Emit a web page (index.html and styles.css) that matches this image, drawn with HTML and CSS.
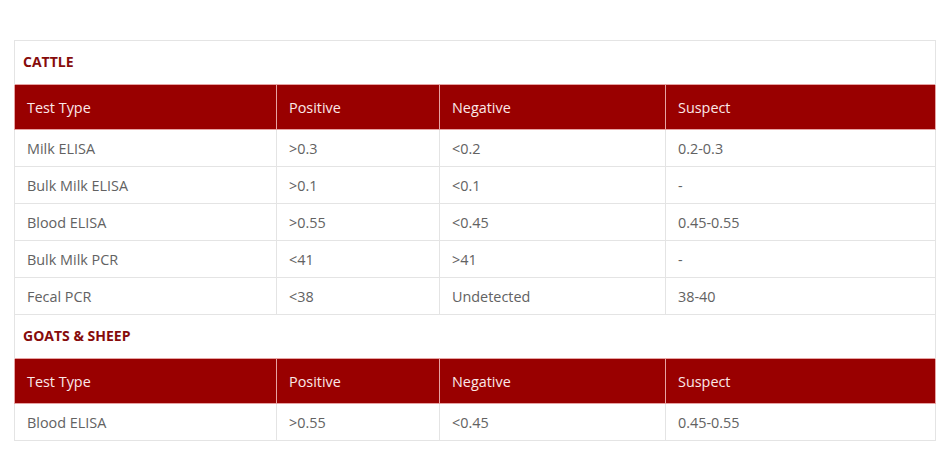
FILE: index.html
```
<!DOCTYPE html>
<html>
<head>
<meta charset="utf-8">
<link rel="stylesheet" href="styles.css">
</head>
<body>
<div class="wrap">
<table class="tests">
  <colgroup>
    <col class="c1"><col class="c2"><col class="c3"><col class="c4">
  </colgroup>
  <tr class="title"><td colspan="4">CATTLE</td></tr>
  <tr class="head"><th>Test Type</th><th>Positive</th><th>Negative</th><th>Suspect</th></tr>
  <tr><td>Milk ELISA</td><td>&gt;0.3</td><td>&lt;0.2</td><td>0.2-0.3</td></tr>
  <tr><td>Bulk Milk ELISA</td><td>&gt;0.1</td><td>&lt;0.1</td><td>-</td></tr>
  <tr><td>Blood ELISA</td><td>&gt;0.55</td><td>&lt;0.45</td><td>0.45-0.55</td></tr>
  <tr><td>Bulk Milk PCR</td><td>&lt;41</td><td>&gt;41</td><td>-</td></tr>
  <tr><td>Fecal PCR</td><td>&lt;38</td><td>Undetected</td><td>38-40</td></tr>
  <tr class="title"><td colspan="4">GOATS &amp; SHEEP</td></tr>
  <tr class="head"><th>Test Type</th><th>Positive</th><th>Negative</th><th>Suspect</th></tr>
  <tr><td>Blood ELISA</td><td>&gt;0.55</td><td>&lt;0.45</td><td>0.45-0.55</td></tr>
</table>
</div>
</body>
</html>
```
FILE: styles.css
```
html, body {
  margin: 0;
  padding: 0;
  background: #ffffff;
}
body {
  font-family: "Open Sans", "Liberation Sans", sans-serif;
}
.wrap {
  padding: 40px 11px 0 14px;
}
.tests {
  border-collapse: collapse;
  table-layout: fixed;
  width: 921px;
}
.c1 { width: 262px; }
.c2 { width: 163px; }
.c3 { width: 226px; }
.c4 { width: 270px; }
.tests td, .tests th {
  border: 1px solid #e4e4e4;
  font-size: 14.4px;
  color: #626262;
  text-align: left;
  font-weight: normal;
  padding: 0 12px;
  height: 36px;
  box-sizing: border-box;
  vertical-align: middle;
}
.tests tr.title td {
  height: 44px;
  padding: 0 8px 2px;
  font-weight: bold;
  color: #860b0b;
  font-size: 14px;
  border-bottom: none;
}
.tests tr.head th {
  height: 45px;
  background: #990000;
  color: #fbe8e8;
  border: 1px solid #e6a3a3;
}
.tests tr:not(.title):not(.head) td {
  height: 37px;
}
```
